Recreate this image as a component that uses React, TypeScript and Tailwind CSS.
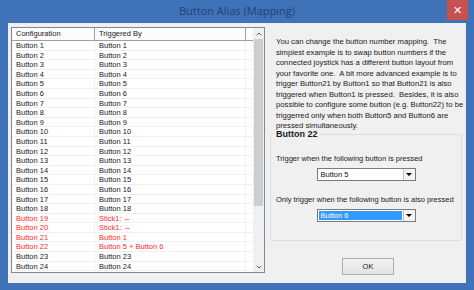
import { ChevronUp, ChevronDown } from "lucide-react";

const SPECIAL: Record<number, string> = {
  19: "Stick1: ←",
  20: "Stick1: →",
  21: "Button 1",
  22: "Button 5 + Button 6",
};

const ROWS = Array.from({ length: 24 }, (_, i) => {
  const n = i + 1;
  return {
    cfg: `Button ${n}`,
    trig: SPECIAL[n] ?? `Button ${n}`,
    red: n >= 19 && n <= 22,
  };
});

const HELP = [
  "You can change the button number mapping.  The",
  "simplest example is to swap button numbers if the",
  "connected joystick has a different button layout from",
  "your favorite one.  A bit more advanced example is to",
  "trigger Button21 by Button1 so that Button21 is also",
  "triggered when Button1 is pressed.  Besides, it is also",
  "possible to configure some button (e.g. Button22) to be",
  "triggerred only when both Button5 and Button6 are",
  "pressed simultaneously.",
];

const Combo = ({ value, selected }: { value: string; selected?: boolean }) => (
  <div className="w-[99px] h-[13px] border border-[#7a7a7a] bg-white flex items-stretch">
    <div className="flex-1 p-[1px]">
      <div
        className={
          selected
            ? "h-full bg-[#3399ff] text-white text-[7.5px] leading-[9px] pl-[2px]"
            : "h-full text-[#111] text-[7.5px] leading-[9px] pl-[2px]"
        }
      >
        {value}
      </div>
    </div>
    <div className="w-[12px] border-l border-[#c4c4c4] bg-[#f3f3f3] flex items-center justify-center">
      <div className="w-0 h-0 border-l-[3px] border-r-[3px] border-t-[3px] border-l-transparent border-r-transparent border-t-black" />
    </div>
  </div>
);

export default function App() {
  return (
    <div className="w-[474px] h-[290px] bg-[#3f72b6] flex flex-col font-['Liberation_Sans',Arial,sans-serif] overflow-hidden">
      {/* Title bar */}
      <div className="h-[23px] relative flex items-center justify-center">
        <span className="font-['Open_Sans',sans-serif] text-[11px] text-[#1f4178] leading-none -mt-[2px]">
          Button Alias (Mapping)
        </span>
        <div className="absolute right-[6px] top-0 w-[21px] h-[20px] bg-[#c75050] flex items-center justify-center text-white text-[11px] leading-none">
          ✕
        </div>
      </div>

      {/* Client */}
      <div className="flex-1 mx-[8px] mb-[7px] bg-[#f0f0f0] flex">
        {/* List view */}
        <div className="ml-[3px] mt-[4px] w-[254px] h-[246px] border border-[#828790] bg-white flex">
          <div className="flex-1 flex flex-col">
            <div className="h-[13px] flex border-b border-[#a0a0a0] bg-[#fcfcfc] text-[7.5px] text-[#1a1a1a]">
              <div className="w-[83px] border-r border-[#a0a0a0] pl-[4px] leading-[12px]">Configuration</div>
              <div className="w-[151px] border-r border-[#a0a0a0] pl-[4px] leading-[12px]">Triggered By</div>
              <div className="flex-1" />
            </div>
            {ROWS.map((r) => (
              <div
                key={r.cfg}
                className={
                  r.red
                    ? "h-[9.6px] flex border-b border-[#f0f0f0] text-[7.5px] leading-[9px] text-[#ff2a2a]"
                    : "h-[9.6px] flex border-b border-[#f0f0f0] text-[7.5px] leading-[9px] text-[#1a1a1a]"
                }
              >
                <div className="w-[83px] border-r border-[#f0f0f0] pl-[4px] whitespace-nowrap">{r.cfg}</div>
                <div className="w-[151px] border-r border-[#f0f0f0] pl-[4px] whitespace-nowrap">{r.trig}</div>
                <div className="flex-1" />
              </div>
            ))}
          </div>
          {/* Scrollbar */}
          <div className="w-[11px] bg-[#f0f0f0] flex flex-col items-center">
            <div className="h-[11px] flex items-center justify-center text-[#606060]">
              <ChevronUp size={8} strokeWidth={3} />
            </div>
            <div className="w-[9px] h-[167px] bg-[#cdcdcd]" />
            <div className="flex-1" />
            <div className="h-[11px] flex items-center justify-center text-[#606060]">
              <ChevronDown size={8} strokeWidth={3} />
            </div>
          </div>
        </div>

        {/* Right side */}
        <div className="ml-[5px] w-[192px] flex flex-col">
          <div className="mt-[14px] h-[95px] pl-[6px] text-[7.7px] leading-[10.5px] text-[#1a1a1a]">
            {HELP.map((l) => (
              <div key={l} className="whitespace-pre">
                {l}
              </div>
            ))}
          </div>

          <div className="mt-[2px] relative h-[107px] border border-[#d5dfe5] rounded-[2px] flex flex-col">
            <div className="absolute -top-[5px] left-[3px] bg-[#f0f0f0] px-[2px] text-[9px] leading-[9px] font-bold text-[#1a1a1a]">
              Button 22
            </div>
            <div className="mt-[19px] pl-[5px] text-[7.5px] leading-[10px] text-[#1a1a1a]">
              Trigger when the following button is pressed
            </div>
            <div className="mt-[4px] flex justify-center">
              <Combo value="Button 5" />
            </div>
            <div className="mt-[14px] pl-[5px] text-[7.5px] leading-[10px] text-[#1a1a1a]">
              Only trigger when the following button is also pressed
            </div>
            <div className="mt-[4px] flex justify-center">
              <Combo value="Button 6" selected />
            </div>
          </div>

          <div className="mt-[17px] ml-[72px] w-[52px] h-[17px] border border-[#adadad] bg-gradient-to-b from-[#f2f2f2] to-[#e3e3e3] flex items-center justify-center text-[7.5px] text-[#1a1a1a]">
            OK
          </div>
        </div>
      </div>
    </div>
  );
}
